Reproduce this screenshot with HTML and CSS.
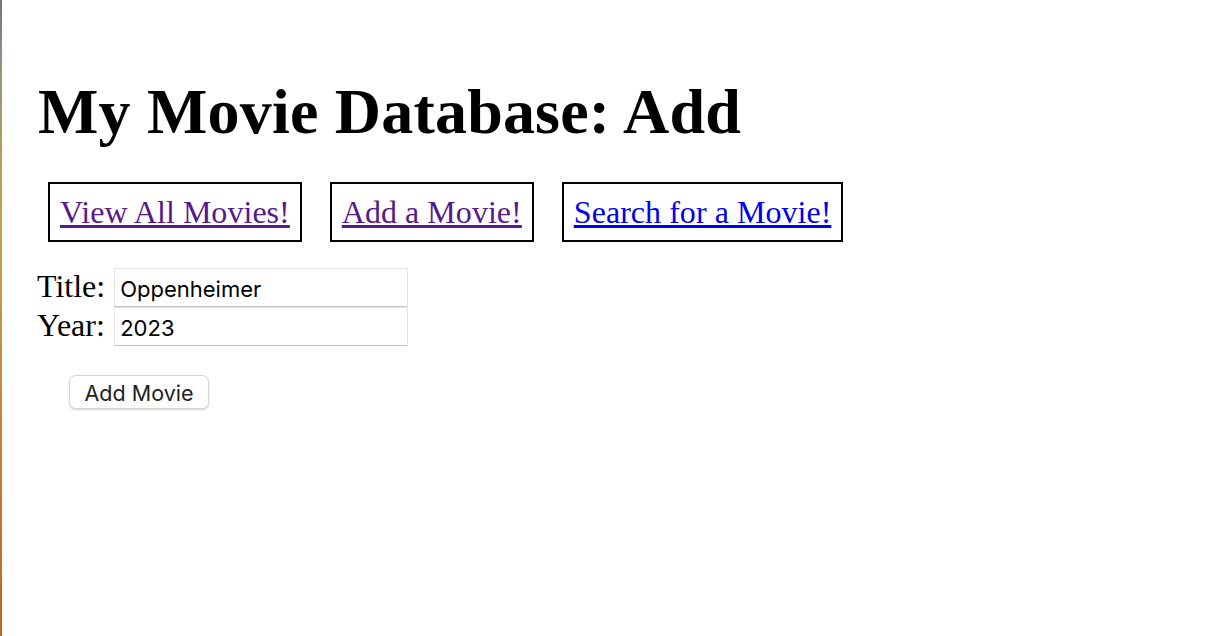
FILE: index.html
```html
<!DOCTYPE html>
<html lang="en">
<head>
<meta charset="utf-8">
<title>My Movie Database: Add</title>
<link rel="stylesheet" href="styles.css">
</head>
<body>
<div class="edge"></div>
<main class="page">
  <h1 class="title">My Movie Database: Add</h1>
  <nav class="nav">
    <div class="nav-item"><a class="visited" href="#all">View All Movies!</a></div>
    <div class="nav-item"><a class="visited" href="#add">Add a Movie!</a></div>
    <div class="nav-item"><a class="fresh" href="#search">Search for a Movie!</a></div>
  </nav>
  <form class="form">
    <div class="fields">
      <label class="label" for="title">Title:</label>
      <input class="field" id="title" type="text" value="Oppenheimer">
      <label class="label" for="year">Year:</label>
      <input class="field" id="year" type="text" value="2023">
    </div>
    <button class="submit" type="button">Add Movie</button>
  </form>
</main>
</body>
</html>
```

FILE: styles.css
```css
html, body {
  margin: 0;
  padding: 0;
  background: #ffffff;
}

body {
  display: flex;
  min-height: 636px;
  font-family: "Liberation Serif", "Times New Roman", serif;
  color: #000;
}

.edge {
  width: 2px;
  flex: none;
  background: linear-gradient(to bottom, #6f7686 0%, #a0957a 12%, #c3a24a 35%, #c7863a 65%, #b8672a 100%);
}

.page {
  flex: 1;
  padding-left: 35px;
}

.title {
  margin: 75px 0 33px 1px;
  font-size: 64px;
  line-height: 74px;
  font-weight: bold;
  letter-spacing: 0.2px;
}

.nav {
  display: flex;
  gap: 28px;
  margin-left: 11px;
}

.nav-item {
  border: 2px solid #000;
  padding: 10px 10px;
  font-size: 32px;
  line-height: 36px;
  letter-spacing: 0.04px;
}

.nav-item a {
  text-decoration: underline;
}

.visited {
  color: #551a8b;
}

.fresh {
  color: #0000ee;
}

.form {
  margin-top: 26px;
}

.fields {
  display: grid;
  grid-template-columns: max-content 294px;
  column-gap: 9px;
  align-items: baseline;
}

.label {
  font-size: 32px;
  line-height: 32px;
}

.field {
  box-sizing: border-box;
  width: 294px;
  height: 39px;
  margin: 0;
  padding: 3px 5px 0 5px;
  border: 1px solid #e4e4e4;
  border-bottom-color: #c2c2c2;
  border-radius: 0;
  background: #fff;
  font-family: Inter, "Noto Sans", sans-serif;
  font-size: 22px;
  color: #000;
  outline: none;
}

.submit {
  display: block;
  box-sizing: border-box;
  margin: 29px 0 0 32px;
  width: 140px;
  height: 34px;
  padding: 2px 0 0 0;
  border: 1px solid #d6d6d6;
  border-radius: 7px;
  background: #fff;
  box-shadow: 0 1px 2px rgba(0, 0, 0, 0.18);
  font-family: Inter, "Noto Sans", sans-serif;
  font-size: 21.5px;
  color: #222;
}
```
